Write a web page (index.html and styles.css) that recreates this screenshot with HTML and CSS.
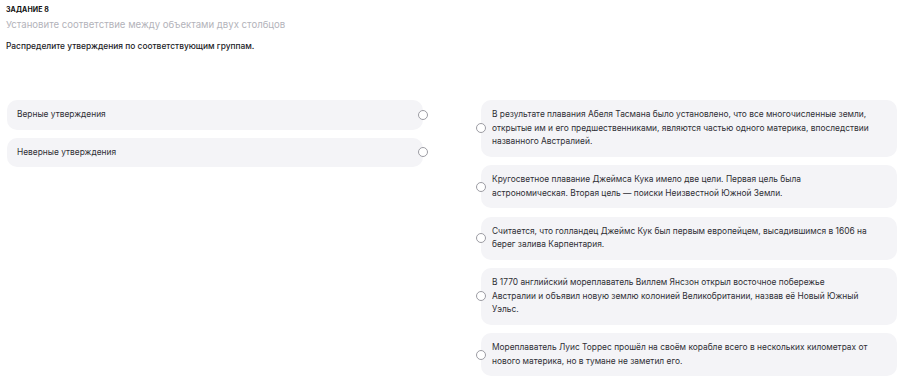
FILE: index.html
```html
<!DOCTYPE html>
<html lang="ru">
<head>
<meta charset="utf-8">
<link rel="stylesheet" href="styles.css">
</head>
<body>
<div class="page">
  <div class="task-label">ЗАДАНИЕ 8</div>
  <div class="task-sub">Установите соответствие между объектами двух столбцов</div>
  <div class="task-q">Распределите утверждения по соответствующим группам.</div>
  <div class="columns">
    <div class="col col-left">
      <div class="card card-left">Верные утверждения<span class="dot dot-right"></span></div>
      <div class="card card-left">Неверные утверждения<span class="dot dot-right"></span></div>
    </div>
    <div class="col col-right">
      <div class="card card-right"><span class="dot dot-left"></span>В результате плавания Абеля Тасмана было установлено, что все многочисленные земли, открытые им и его предшественниками, являются частью одного материка, впоследствии названного Австралией.</div>
      <div class="card card-right"><span class="dot dot-left"></span>Кругосветное плавание Джеймса Кука имело две цели. Первая цель была астрономическая. Вторая цель — поиски Неизвестной Южной Земли.</div>
      <div class="card card-right"><span class="dot dot-left"></span>Считается, что голландец Джеймс Кук был первым европейцем, высадившимся в 1606 на берег залива Карпентария.</div>
      <div class="card card-right"><span class="dot dot-left"></span>В 1770 английский мореплаватель Виллем Янсзон открыл восточное побережье<br>Австралии и объявил новую землю колонией Великобритании, назвав её Новый Южный Уэльс.</div>
      <div class="card card-right"><span class="dot dot-left"></span>Мореплаватель Луис Торрес прошёл на своём корабле всего в нескольких километрах от нового материка, но в тумане не заметил его.</div>
    </div>
  </div>
</div>
</body>
</html>
```

FILE: styles.css
```css
* { box-sizing: border-box; }
html, body { margin: 0; padding: 0; background: #fff; }
body {
  font-family: Inter, "Noto Sans", "Liberation Sans", sans-serif;
  color: #2b2b30;
}
.page {
  padding: 5px 3px 0 6px;
}
.task-label {
  font-size: 7px;
  font-weight: 700;
  line-height: 9px;
  color: #111;
  letter-spacing: 0.1px;
}
.task-sub {
  margin-top: 4px;
  font-size: 9.6px;
  line-height: 13px;
  color: #b3b3ba;
}
.task-q {
  margin-top: 9px;
  font-size: 8.4px;
  font-weight: 500;
  line-height: 12px;
  color: #1b1b1f;
}
.columns {
  margin-top: 48px;
  padding-left: 1px;
  display: grid;
  grid-template-columns: 416px 416px;
  column-gap: 58px;
  align-items: start;
}
.col {
  display: flex;
  flex-direction: column;
}
.col-left { gap: 8px; }
.col-right { gap: 8.5px; }
.card {
  position: relative;
  background: #f4f4f7;
  border-radius: 10px;
  font-size: 8.4px;
  line-height: 13.5px;
  color: #2f2f35;
}
.card-left {
  padding: 8px 20px 8px 10px;
}
.card-right {
  padding: 8px 23px 8px 11px;
}
.dot {
  position: absolute;
  top: 50%;
  width: 10px;
  height: 10px;
  margin-top: -5px;
  border-radius: 50%;
  border: 1px solid #9c9ca3;
  background: #fff;
}
.dot-right { right: -5px; }
.dot-left { left: -5px; }
```
